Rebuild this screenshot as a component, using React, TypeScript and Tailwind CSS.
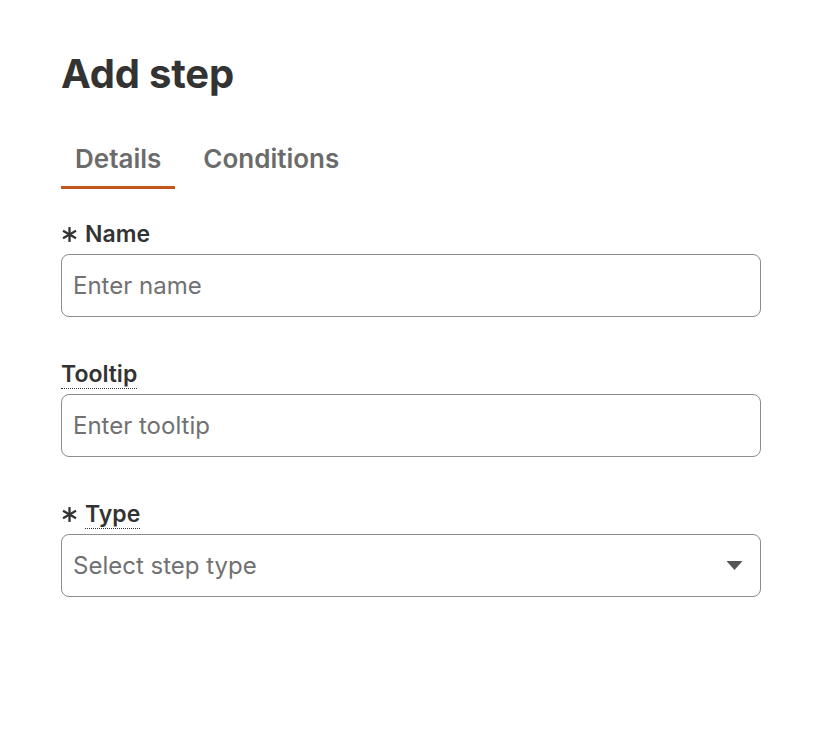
import React from 'react';

const font = { fontFamily: 'Inter, "Noto Sans", sans-serif' };

const Asterisk = () => (
  <svg width="17" height="17" viewBox="0 0 16 16" className="mr-[7px] text-[#333]">
    <g stroke="currentColor" strokeWidth="2.2" strokeLinecap="butt">
      <line x1="8" y1="1" x2="8" y2="15" />
      <line x1="1.9" y1="4.5" x2="14.1" y2="11.5" />
      <line x1="1.9" y1="11.5" x2="14.1" y2="4.5" />
    </g>
  </svg>
);

interface FieldLabelProps {
  text: string;
  required?: boolean;
  dotted?: boolean;
}

const FieldLabel: React.FC<FieldLabelProps> = ({ text, required, dotted }) => (
  <div className="flex h-[40px] items-center text-[23px] font-semibold text-[#333]">
    {required && <Asterisk />}
    <span className={dotted ? 'border-b border-dotted border-[#333] leading-[28px]' : 'leading-[28px]'}>
      {text}
    </span>
  </div>
);

const inputClass =
  'h-[63px] w-full rounded-[8px] border border-[#8c8c8c] bg-white px-[11px] text-[24px] text-[#333] placeholder:text-[#717171] outline-none';

export default function App() {
  return (
    <div className="min-h-screen bg-white" style={font}>
      <div className="w-[700px] pl-[61px] pt-[46px] box-content">
        <h1 className="text-[40px] font-bold leading-[56px] tracking-[-0.2px] text-[#333]">Add step</h1>

        <div className="mt-[32px] flex gap-[14px]">
          <button
            type="button"
            className="border-b-[3px] border-[#c4561c] px-[14px] pb-[8px] pt-[5px] text-[26px] font-semibold text-[#6b6b6b]"
          >
            Details
          </button>
          <button
            type="button"
            className="border-b-[3px] border-transparent px-[14px] pb-[8px] pt-[5px] text-[26px] font-semibold text-[#6b6b6b]"
          >
            Conditions
          </button>
        </div>

        <div className="mt-[25px] flex flex-col">
          <FieldLabel text="Name" required />
          <input className={inputClass} placeholder="Enter name" />

          <div className="mt-[37px]">
            <FieldLabel text="Tooltip" dotted />
          </div>
          <input className={inputClass} placeholder="Enter tooltip" />

          <div className="mt-[37px]">
            <FieldLabel text="Type" required dotted />
          </div>
          <button
            type="button"
            className="flex h-[63px] w-full items-center justify-between rounded-[8px] border border-[#8c8c8c] bg-white pl-[11px] pr-[17px] text-[24px] text-[#717171]"
          >
            <span>Select step type</span>
            <svg width="17" height="9" viewBox="0 0 16 9">
              <path d="M0 0 H16 L8 9 Z" fill="#555" />
            </svg>
          </button>
        </div>
      </div>
    </div>
  );
}
